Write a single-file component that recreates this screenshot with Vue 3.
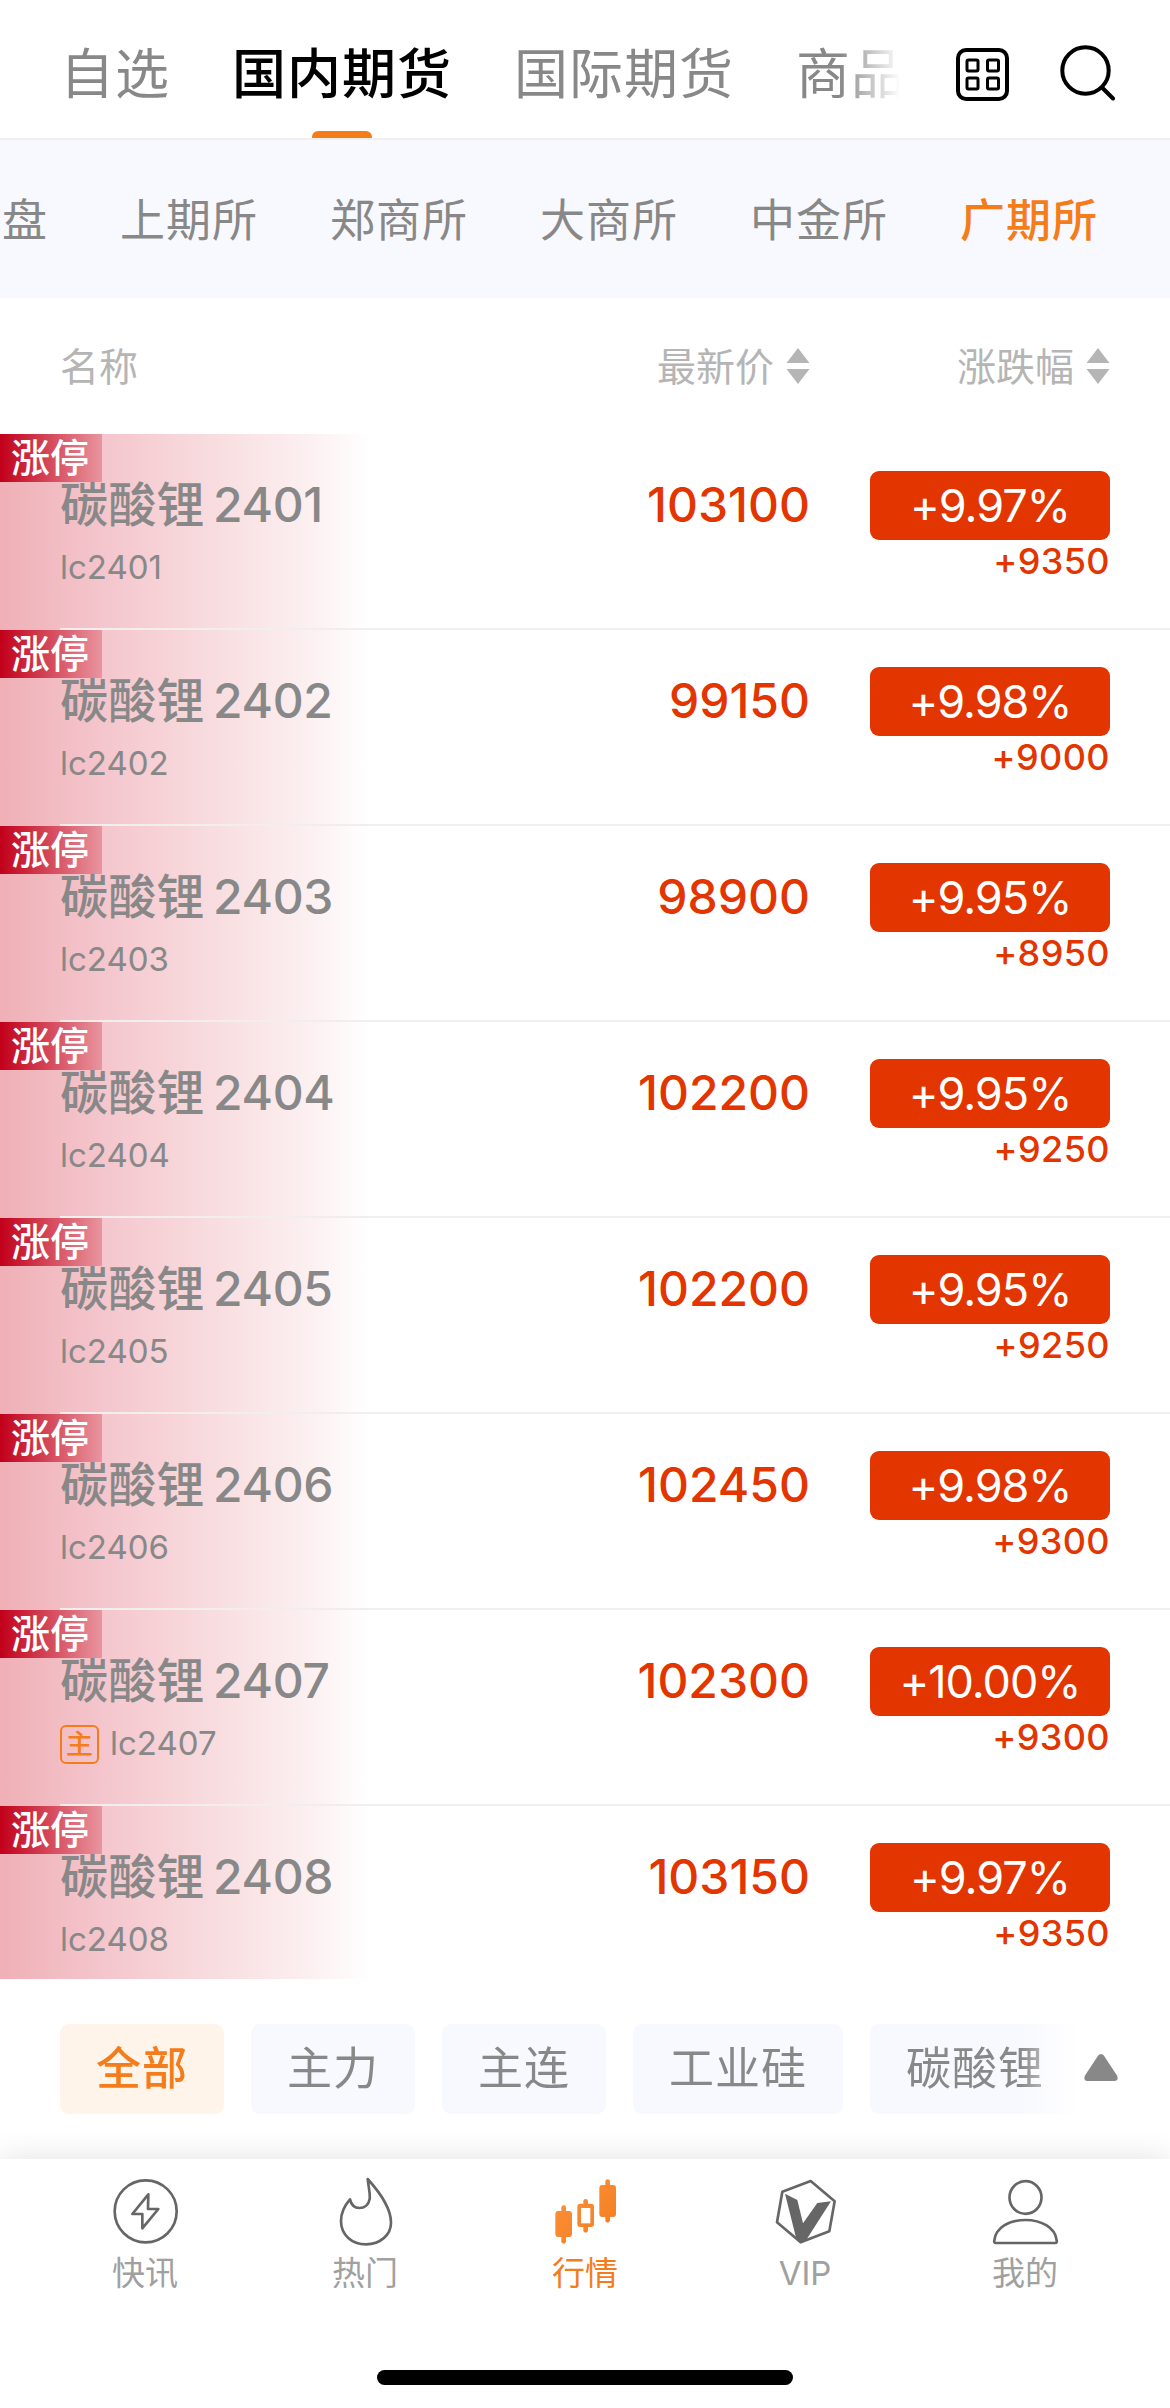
<template>
	<div class="page">
		<header class="top-bar">
			<nav class="market-tabs">
				<span v-for="(tab, i) in markets" :key="tab" class="market-tab" :class="{ active: i === 1 }">{{ tab }}</span>
			</nav>
			<div class="top-actions">
				<svg class="icon-grid" viewBox="0 0 54 54" fill="none" stroke="#000">
					<rect x="2" y="2" width="49" height="49" rx="8" stroke-width="4" />
					<g stroke-width="3">
						<rect x="11" y="12" width="11" height="11" rx="1.5" />
						<rect x="31.5" y="12" width="11" height="11" rx="1.5" />
						<rect x="11" y="30" width="11" height="11" rx="1.5" />
						<rect x="31.5" y="30" width="11" height="11" rx="1.5" />
					</g>
				</svg>
				<svg class="icon-search" viewBox="0 0 56 56" fill="none" stroke="#000" stroke-width="4" stroke-linecap="round">
					<circle cx="25.5" cy="25.5" r="23.2" />
					<line x1="42" y1="42.5" x2="53" y2="53.5" />
				</svg>
			</div>
		</header>

		<nav class="exchange-tabs">
			<span v-for="name in exchanges" :key="name" class="exchange" :class="{ active: name === '广期所' }">{{ name }}</span>
		</nav>

		<div class="list-head">
			<span class="label">名称</span>
			<span class="col-sort">
				<span class="label">最新价</span>
				<svg class="sort" viewBox="0 0 24 36"><path d="M12 0L23.5 15H.5zM12 36L.5 21h23z" /></svg>
			</span>
			<span class="col-sort">
				<span class="label">涨跌幅</span>
				<svg class="sort" viewBox="0 0 24 36"><path d="M12 0L23.5 15H.5zM12 36L.5 21h23z" /></svg>
			</span>
		</div>

		<main class="list">
			<div v-for="item in quotes" :key="item.code" class="row">
				<span class="limit">涨停</span>
				<div class="row-body">
					<div class="info">
						<div class="name">碳酸锂<span class="month">{{ item.code }}</span></div>
						<div class="code"><i v-if="item.main" class="main-tag">主</i><span class="code-text">lc{{ item.code }}</span></div>
					</div>
					<div class="price">{{ item.price }}</div>
					<div class="change">
						<div class="percent">{{ item.percent }}</div>
						<div class="diff">{{ item.diff }}</div>
					</div>
				</div>
			</div>
		</main>

		<div class="filters">
			<div class="chips">
				<span v-for="(chip, i) in filters" :key="chip" class="chip" :class="{ active: i === 0 }">{{ chip }}</span>
			</div>
			<svg class="expand" viewBox="0 0 34 27"><path d="M14 1.8Q17-1.6 20 1.8L33 21.5Q35 26.500 30.500 27H3.500Q-1 26.500 1 21.500z" /></svg>
		</div>

		<footer class="tab-bar">
			<div class="tabs">
				<div class="tab">
					<svg class="tab-icon" viewBox="0 0 216 216">
						<circle cx="110" cy="109" r="93" />
						<path d="M118 58L70 117H100V160L148 102H117Z" />
					</svg>
					<span>快讯</span>
				</div>
				<div class="tab">
					<svg class="tab-icon" viewBox="0 0 216 216">
						<path d="M116 12C155 55 186 105 186 143C186 180 153 208 111 208C69 208 36 180 36 138C36 113 48 90 63 73C67 90 78 99 91 99C106 99 119 90 122 72C124 60 121 50 116 12Z" />
					</svg>
					<span>热门</span>
				</div>
				<div class="tab active">
					<svg class="tab-icon solid" viewBox="0 0 216 216">
						<defs>
							<linearGradient id="candle" gradientUnits="userSpaceOnUse" x1="0" y1="0" x2="216" y2="216">
								<stop offset="0" stop-color="#ff9440" />
								<stop offset="1" stop-color="#f27a1a" />
							</linearGradient>
						</defs>
						<g fill="url(#candle)">
							<rect x="19" y="108" width="50" height="78" rx="9" />
							<rect x="37" y="91" width="14" height="115" rx="7" />
							<rect x="85" y="86" width="50" height="70" rx="9" />
							<rect x="103" y="72" width="14" height="101" rx="7" />
							<rect x="151" y="30" width="50" height="96" rx="9" />
							<rect x="169" y="13" width="14" height="130" rx="7" />
						</g>
						<rect x="96" y="99" width="28" height="46" fill="#fff" />
					</svg>
					<span>行情</span>
				</div>
				<div class="tab">
					<svg class="tab-icon" viewBox="0 0 216 216">
						<path d="M125 18L197 79L181 169L95 202L24 142L40 50Z" />
						<path class="fill" d="M48 56L85 75L102 145L145 84L186 79L113 193L95 202L83 196Z" />
					</svg>
					<span>VIP</span>
				</div>
				<div class="tab">
					<svg class="tab-icon" viewBox="0 0 216 216">
						<ellipse cx="109.500" cy="67.500" rx="48" ry="49" />
						<path d="M20 204C16 204 15 200 16 196C20 158 60 135 109 135C158 135 199 158 203 196C204 200 203 204 199 204Z" />
					</svg>
					<span>我的</span>
				</div>
			</div>
			<div class="home-indicator"></div>
		</footer>
	</div>
</template>

<script setup>
	const markets = ['自选', '国内期货', '国际期货', '商品'];
	const exchanges = ['盘', '上期所', '郑商所', '大商所', '中金所', '广期所'];
	const filters = ['全部', '主力', '主连', '工业硅', '碳酸锂'];

	const quotes = [
		{ code: '2401', price: '103100', percent: '+9.97%', diff: '+9350' },
		{ code: '2402', price: '99150', percent: '+9.98%', diff: '+9000' },
		{ code: '2403', price: '98900', percent: '+9.95%', diff: '+8950' },
		{ code: '2404', price: '102200', percent: '+9.95%', diff: '+9250' },
		{ code: '2405', price: '102200', percent: '+9.95%', diff: '+9250' },
		{ code: '2406', price: '102450', percent: '+9.98%', diff: '+9300' },
		{ code: '2407', price: '102300', percent: '+10.00%', diff: '+9300', main: true },
		{ code: '2408', price: '103150', percent: '+9.97%', diff: '+9350' },
	];
</script>

<style>
	body {
		margin: 0;
		background: #fff;
	}
</style>

<style scoped>
	.page {
		width: 1170px;
		height: 2408px;
		display: flex;
		flex-direction: column;
		overflow: hidden;
		background: #fff;
		color: #888;
		font-family: Inter, "Noto Sans CJK SC", sans-serif;
		white-space: nowrap;
	}

	/* 顶部市场切换 */
	.top-bar {
		box-sizing: border-box;
		height: 140px;
		flex: none;
		display: flex;
		border-bottom: 2px solid #f2eeed;
	}

	.market-tabs {
		width: 910px;
		flex: none;
		box-sizing: border-box;
		padding-left: 60px;
		display: flex;
		gap: 62px;
		overflow: hidden;
		font-size: 54px;
		letter-spacing: 1px;
		line-height: 150px;
		-webkit-mask-image: linear-gradient(90deg, #000 840px, transparent 900px);
		mask-image: linear-gradient(90deg, #000 840px, transparent 900px);
	}

	.market-tab {
		flex: none;
		position: relative;
	}

	.market-tab.active {
		color: #000;
		font-weight: 500;
	}

	.market-tab.active::after {
		content: "";
		position: absolute;
		left: 50%;
		top: 131px;
		width: 60px;
		height: 7px;
		margin-left: -30px;
		border-radius: 6px 6px 0 0;
		background: #f57c1a;
	}

	.top-actions {
		display: flex;
		align-items: flex-start;
		padding: 45px 0 0 46px;
		gap: 50px;
	}

	.icon-grid {
		width: 54px;
		height: 54px;
		margin-top: 3px;
	}

	.icon-search {
		width: 56px;
		height: 56px;
	}

	/* 交易所 */
	.exchange-tabs {
		flex: none;
		height: 158px;
		padding-left: 2px;
		display: flex;
		gap: 72px;
		background: #f8f9fe;
		font-size: 45px;
		letter-spacing: 1px;
		line-height: 161px;
	}

	.exchange.active {
		color: #f57c1a;
		font-weight: 500;
	}

	.list-head {
		flex: none;
		box-sizing: border-box;
		height: 136px;
		padding: 0 60px;
		display: grid;
		grid-template-columns: 1fr 300px 300px;
		align-items: center;
		font-size: 39px;
		color: #b5b5b5;
	}

	.label {
		padding-bottom: 5px;
	}

	.col-sort {
		display: flex;
		align-items: center;
		justify-content: flex-end;
		gap: 12px;
	}

	.sort {
		width: 24px;
		height: 36px;
		fill: #b5b5b5;
	}

	/* 行情列表 */
	.list {
		flex: none;
		height: 1545px;
		overflow: hidden;
	}

	.row {
		position: relative;
		height: 196px;
		background: linear-gradient(90deg, #efb0b6 0, #f4c5cc 100px, #f8dcdf 210px, #fcf0f1 310px, #fff 370px);
	}

	.limit {
		position: absolute;
		left: 0;
		top: 0;
		width: 102px;
		height: 48px;
		box-sizing: border-box;
		padding-left: 11px;
		background: linear-gradient(90deg, #c1001a, #e9959f);
		color: #fff;
		font-size: 39px;
		font-weight: 500;
		line-height: 48px;
	}

	.row-body {
		box-sizing: border-box;
		height: 196px;
		margin-left: 60px;
		padding-right: 60px;
		border-bottom: 2px solid #f2eeed;
		display: grid;
		grid-template-columns: 1fr 300px 300px;
	}

	.name {
		margin-top: 41px;
		height: 60px;
		line-height: 60px;
		font-size: 48px;
		font-weight: 500;
		letter-spacing: 0.3px;
	}

	.month {
		margin-left: 8px;
		letter-spacing: -0.3px;
	}

	.code {
		display: flex;
		align-items: center;
		margin-top: 14px;
		height: 39px;
		font-size: 33px;
	}

	.code-text {
		padding-bottom: 3px;
	}

	.main-tag {
		box-sizing: border-box;
		width: 39px;
		height: 39px;
		margin-right: 11px;
		border: 2px solid #f57c1a;
		border-radius: 6px;
		color: #f57c1a;
		font-size: 27px;
		font-style: normal;
		font-weight: 500;
		line-height: 35px;
		text-align: center;
	}

	.price {
		margin-top: 41px;
		line-height: 60px;
		font-size: 48px;
		font-weight: 500;
		color: #e33500;
		text-align: right;
	}

	.change {
		padding: 37px 0 0 60px;
		color: #e33500;
		text-align: right;
	}

	.percent {
		height: 69px;
		border-radius: 9px;
		background: #e33500;
		color: #fff;
		font-size: 45px;
		letter-spacing: -1px;
		line-height: 69px;
		text-align: center;
	}

	.diff {
		font-size: 36px;
		font-weight: 500;
		letter-spacing: 0.4px;
		line-height: 42px;
	}

	/* 品种筛选 */
	.filters {
		flex: none;
		box-sizing: border-box;
		height: 180px;
		padding: 45px 0 0 60px;
		display: flex;
	}

	.chips {
		width: 1020px;
		display: flex;
		gap: 27px;
		overflow: hidden;
		-webkit-mask-image: linear-gradient(90deg, #000 960px, transparent 1020px);
		mask-image: linear-gradient(90deg, #000 960px, transparent 1020px);
	}

	.chip {
		flex: none;
		height: 90px;
		padding: 0 36px;
		border-radius: 9px;
		background: #f8f9fe;
		font-size: 45px;
		letter-spacing: 1px;
		line-height: 90px;
	}

	.chip.active {
		background: #fff4ea;
		color: #f57c1a;
		font-weight: 500;
	}

	.expand {
		width: 34px;
		height: 27px;
		margin: 30px 0 0 4px;
		fill: #888;
	}

	/* 底部导航 */
	.tab-bar {
		flex: 1;
		position: relative;
		display: flex;
		flex-direction: column;
		align-items: center;
		justify-content: space-between;
		background: #fff;
		box-shadow: 0 0 30px rgba(0, 0, 0, 0.12);
	}

	.tabs {
		display: flex;
		padding-top: 16px;
	}

	.tab {
		width: 220px;
		display: flex;
		flex-direction: column;
		align-items: center;
		font-size: 33px;
		line-height: 53px;
		color: #a0a0a0;
	}

	.tab.active {
		color: #f57c1a;
	}

	.tab-icon {
		width: 72px;
		height: 72px;
		fill: none;
		stroke: #666;
		stroke-width: 8;
		stroke-linejoin: round;
	}

	.tab-icon.solid {
		stroke: none;
	}

	.tab-icon .fill {
		fill: #666;
		stroke: none;
	}

	.home-indicator {
		width: 416px;
		height: 15px;
		margin-bottom: 23px;
		border-radius: 8px;
		background: #000;
	}
</style>
